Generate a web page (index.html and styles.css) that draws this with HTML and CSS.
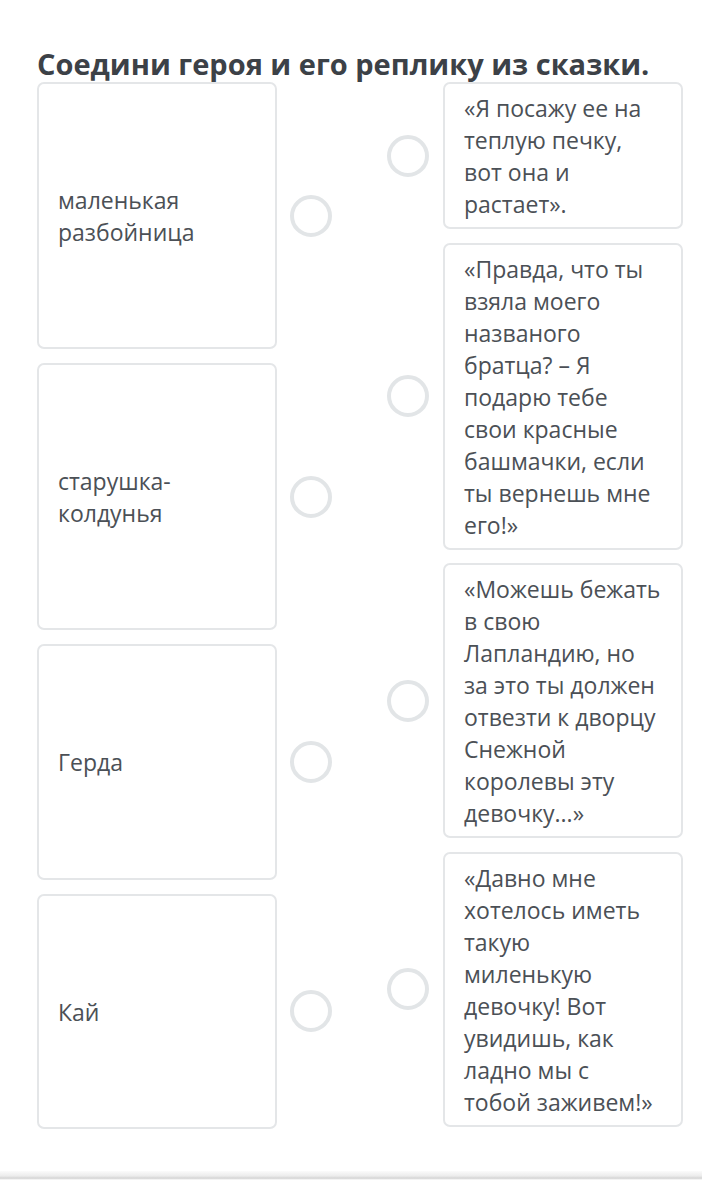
FILE: index.html
```html
<!DOCTYPE html>
<html lang="ru">

<head>
    <meta charset="UTF-8">
    <meta name="viewport" content="width=device-width, initial-scale=1.0">
    <title>Соедини героя и его реплику</title>
    <link rel="stylesheet" href="styles.css">
</head>

<body>

    <div class="task">

        <!-- Question -->
        <h1 class="task-title">Соедини героя и его реплику из сказки.</h1>

        <div class="match">

            <!-- Heroes -->
            <div class="match-col">
                <div class="match-item">
                    <div class="card card-tall">маленькая разбойница</div>
                    <span class="dot"></span>
                </div>
                <div class="match-item">
                    <div class="card card-tall">старушка-<br>колдунья</div>
                    <span class="dot"></span>
                </div>
                <div class="match-item">
                    <div class="card card-short">Герда</div>
                    <span class="dot"></span>
                </div>
                <div class="match-item">
                    <div class="card card-short">Кай</div>
                    <span class="dot"></span>
                </div>
            </div>

            <!-- Replicas -->
            <div class="match-col match-col-right">
                <div class="match-item">
                    <span class="dot"></span>
                    <div class="card card-quote">«Я посажу ее на теплую печку, вот она и растает».</div>
                </div>
                <div class="match-item">
                    <span class="dot"></span>
                    <div class="card card-quote">«Правда, что ты взяла моего названого братца? – Я подарю тебе свои красные башмачки, если ты вернешь мне его!»</div>
                </div>
                <div class="match-item">
                    <span class="dot"></span>
                    <div class="card card-quote">«Можешь бежать в свою Лапландию, но за это ты должен отвезти к дворцу Снежной королевы эту девочку...»</div>
                </div>
                <div class="match-item">
                    <span class="dot"></span>
                    <div class="card card-quote">«Давно мне хотелось иметь такую миленькую девочку! Вот увидишь, как ладно мы с тобой заживем!»</div>
                </div>
            </div>

        </div>
    </div>

    <!-- Bottom bar -->
    <div class="bottom-bar"></div>

</body>
</html>
```

FILE: styles.css
```css
body {
    margin: 0;
    padding: 0;
    background: #fff;
    font-family: 'Open Sans', 'Noto Sans', sans-serif;
    color: #4b5056;
}

.task {
    padding: 48px 19px 0 37px;
}

.task-title {
    margin: 0 0 2px;
    font-size: 29px;
    line-height: 32px;
    font-weight: 700;
    color: #3c4147;
    white-space: nowrap;
}

.match {
    display: flex;
    justify-content: space-between;
}

.match-col {
    display: flex;
    flex-direction: column;
    gap: 14px;
}

.match-col-right {
    gap: 13.5px;
}

.match-item {
    display: flex;
    align-items: center;
    gap: 13px;
}

.card {
    box-sizing: border-box;
    width: 240px;
    border: 2px solid #e4e6e8;
    border-radius: 7px;
    background: #fff;
    font-size: 23px;
    line-height: 32px;
    padding: 8px 20px 7px 19px;
}

.card-tall,
.card-short {
    display: flex;
    align-items: center;
}

.card-tall {
    height: 267px;
}

.card-short {
    height: 235.5px;
}

.dot {
    box-sizing: border-box;
    width: 42px;
    height: 42px;
    border: 4px solid #e2e5e7;
    border-radius: 50%;
    flex-shrink: 0;
}

.match-col-right .match-item {
    gap: 14px;
}

.bottom-bar {
    margin-top: 42px;
    height: 9px;
    background: linear-gradient(#fbfbfb, #ececec 55%, #d4d4d4 80%, #fff 100%);
}
```
